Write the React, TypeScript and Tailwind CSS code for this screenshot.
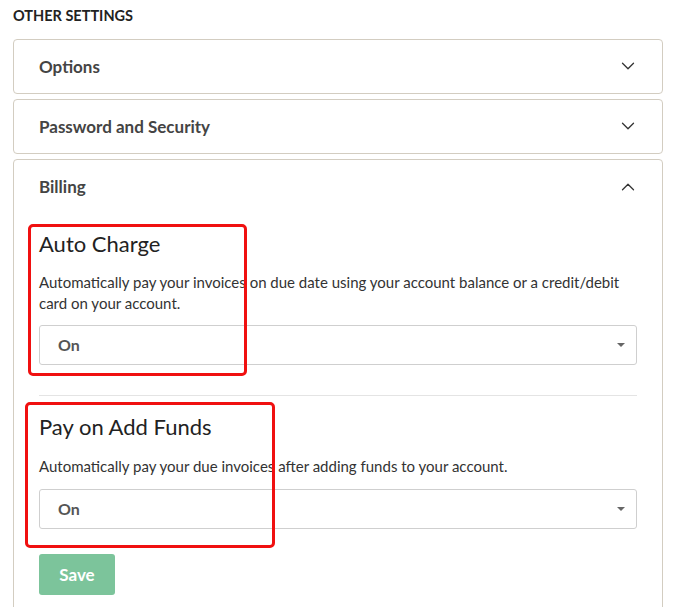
import { ChevronDown, ChevronUp } from "lucide-react";

function CollapsedPanel({ title }: { title: string }) {
  return (
    <div className="flex h-[55px] items-center justify-between rounded-[4px] border border-[#d3cdc1] bg-white pl-[25px] pr-[23px]">
      <span className="text-[17px] font-bold text-[#444]">{title}</span>
      <ChevronDown className="h-[22px] w-[22px] text-[#333]" strokeWidth={1.4} />
    </div>
  );
}

function FakeSelect({ value }: { value: string }) {
  return (
    <div className="flex h-[40px] items-center justify-between rounded-[3px] border border-[#cfcfcf] bg-white pl-[18px] pr-[11px]">
      <span className="text-[16px] font-bold text-[#555]">{value}</span>
      <span className="h-0 w-0 border-x-[4px] border-t-[4px] border-x-transparent border-t-[#666]" />
    </div>
  );
}

export default function App() {
  return (
    <div className="min-h-[607px] bg-white px-[13px] pt-[5px] text-[#333]" style={{ fontFamily: "Lato, 'Noto Sans', sans-serif" }}>
      <div className="text-[14.5px] font-bold uppercase text-[#222]">Other Settings</div>

      <div className="mt-[12px] flex w-[650px] flex-col gap-[5px]">
        <CollapsedPanel title="Options" />
        <CollapsedPanel title="Password and Security" />

        {/* Billing panel, open */}
        <div className="relative rounded-[4px] border border-[#d3cdc1] bg-white px-[25px] pb-[20px]">
          <div className="flex h-[54px] items-center justify-between">
            <span className="text-[17px] font-bold text-[#444]">Billing</span>
            <ChevronUp className="mr-[-2px] h-[22px] w-[22px] text-[#333]" strokeWidth={1.4} />
          </div>

          <div className="mt-[17px]">
            <h3 className="text-[22px] leading-[26px] text-[#222]">Auto Charge</h3>
            <p className="mt-[15px] text-[15px] leading-[21px] text-[#333]">
              Automatically pay your invoices on due date using your account balance or a credit/debit card on your account.
            </p>
            <div className="mt-[11px]">
              <FakeSelect value="On" />
            </div>
          </div>

          <div className="mt-[30px] border-t border-[#e4e4e4]" />

          <div className="mt-[18px]">
            <h3 className="text-[22px] leading-[26px] text-[#222]">Pay on Add Funds</h3>
            <p className="mt-[16px] text-[15px] leading-[21px] text-[#333]">
              Automatically pay your due invoices after adding funds to your account.
            </p>
            <div className="mt-[12px]">
              <FakeSelect value="On" />
            </div>
          </div>

          <button className="mt-[25px] h-[41px] w-[76px] rounded-[3px] bg-[#7cc49b] text-[17px] font-bold text-white">
            Save
          </button>

          {/* annotation boxes */}
          <div className="absolute left-[14px] top-[64px] h-[152px] w-[219px] rounded-[5px] border-[3px] border-[#f01010]" />
          <div className="absolute left-[11px] top-[242px] h-[146px] w-[250px] rounded-[5px] border-[3px] border-[#f01010]" />
        </div>
      </div>
    </div>
  );
}
